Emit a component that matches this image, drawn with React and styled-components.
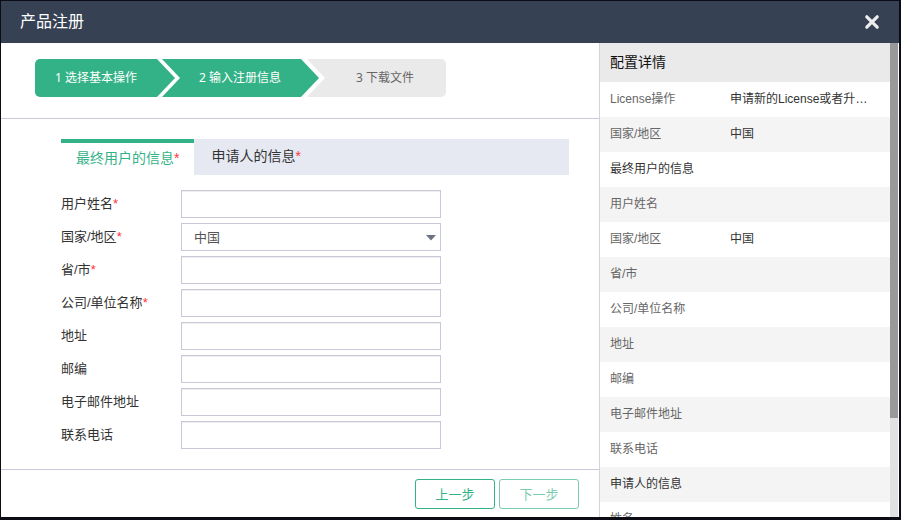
import React, { useState, useEffect, useRef } from 'react'
import styled, { createGlobalStyle } from 'styled-components'

const GlobalStyle = createGlobalStyle`
  * {
    box-sizing: border-box;
  }
  body {
    margin: 0;
    background: #0d0c14;
    color: #333;
    font-family: 'Liberation Sans', 'Noto Sans CJK SC', sans-serif;
    font-size: 12px;
  }
  button,
  input,
  select {
    font-family: inherit;
  }
`
const Page = styled.div`
  height: 100vh;
  padding: 1px 2px 3px 1px;
`
const Dialog = styled.div`
  height: 100%;
  display: flex;
  flex-direction: column;
  background: #fff;
`
const Header = styled.header`
  flex: none;
  display: flex;
  align-items: center;
  justify-content: space-between;
  height: 42px;
  padding: 0 19px;
  background: #364154;
`
const Title = styled.h1`
  margin: 0;
  color: #fff;
  font-size: 16px;
  font-weight: 400;
  line-height: 24px;
`
const CloseButton = styled.button`
  display: flex;
  padding: 0;
  border: 0;
  background: none;
  cursor: pointer;
`
const Body = styled.div`
  flex: 1;
  min-height: 0;
  display: flex;
`
const Main = styled.main`
  flex: 1;
  min-width: 0;
  display: flex;
  flex-direction: column;
`
const Steps = styled.ol`
  display: flex;
  margin: 0;
  padding: 16px 34px 21px;
  border-bottom: 1px solid #c9c8d8;
  list-style: none;
`
const Step = styled.li`
  display: flex;
  align-items: center;
  height: 38px;
  padding: 0 38px 2px 20px;
  background: ${({ $done }) => ($done ? '#34b287' : '#eaeaea')};
  color: ${({ $done }) => ($done ? '#fff' : '#666')};
  font-family: 'Noto Sans', 'Noto Sans CJK SC', sans-serif;
  white-space: nowrap;
  clip-path: polygon(
    0 0,
    calc(100% - 18px) 0,
    100% 50%,
    calc(100% - 18px) 100%,
    0 100%,
    18px 50%
  );

  & + & {
    margin-left: -13px;
    padding-left: 37px;
  }
  &:first-child {
    border-radius: 5px 0 0 5px;
    clip-path: polygon(
      0 0,
      calc(100% - 18px) 0,
      100% 50%,
      calc(100% - 18px) 100%,
      0 100%
    );
  }
  &:last-child {
    margin-left: -12px;
    padding-left: 49px;
    padding-right: 32px;
    border-radius: 0 5px 5px 0;
    clip-path: polygon(0 0, 100% 0, 100% 100%, 0 100%, 18px 50%);
  }
`
const Form = styled.form`
  flex: 1;
  min-height: 0;
  display: flex;
  flex-direction: column;
`
const FormContent = styled.div`
  flex: 1;
  min-height: 0;
  padding: 20px 30px 20px 60px;
`
const Tabs = styled.div`
  display: flex;
  height: 36px;
  margin-bottom: 15px;
  background: #e6e9f1;
`
const Tab = styled.button`
  padding: ${({ $active }) => ($active ? '0 15px 4px' : '0 17px 4px')};
  border: 0;
  border-top: ${({ $active }) => ($active ? '4px solid #34b287' : 0)};
  background: ${({ $active }) => ($active ? '#fff' : 'transparent')};
  color: ${({ $active }) => ($active ? '#34b287' : '#333')};
  font-size: 14px;
  cursor: pointer;
`
const Required = styled.span`
  color: #ff3333;
`
const Fields = styled.div`
  display: grid;
  gap: 5px;
`
const Field = styled.div`
  display: grid;
  grid-template-columns: 120px 260px;
  align-items: center;
`
const Label = styled.label`
  font-size: 13px;
  line-height: 24px;
`
const TextInput = styled.input`
  height: 28px;
  padding: 0 12px;
  border: 1px solid #c9c8d8;
  box-shadow: inset 0 1px 1px rgba(0, 0, 0, 0.07);
  color: #555;
  font-size: 13px;
`
const SelectBox = styled.div`
  position: relative;
`
const Select = styled.select`
  display: block;
  width: 100%;
  height: 28px;
  padding: 0 24px 0 12px;
  border: 1px solid #c9c8d8;
  border-radius: 0;
  background: #fff;
  color: #555;
  font-size: 13px;
  appearance: none;
`
const Arrow = styled.svg`
  position: absolute;
  top: 12px;
  right: 5px;
  pointer-events: none;
`
const Footer = styled.footer`
  display: flex;
  justify-content: flex-end;
  gap: 4px;
  padding: 9px 20px 8px;
  border-top: 1px solid #c9c8d8;
`
const ActionButton = styled.button`
  width: 80px;
  height: 30px;
  padding: 0 0 2px;
  border: 1px solid #34b287;
  border-radius: 3px;
  background: #fff;
  color: #34b287;
  font-size: 13px;
  opacity: ${({ disabled }) => (disabled ? 0.65 : 1)};
`
const Sidebar = styled.aside`
  flex: 0 0 300px;
  display: flex;
  padding-right: 1px;
  border-left: 1px solid #d4d4d8;
`
const SidebarContent = styled.div`
  flex: 1;
  min-width: 0;
  overflow-x: hidden;
  overflow-y: auto;
  scrollbar-width: none;
`
const ScrollTrack = styled.div`
  flex: none;
  width: 8px;
  background: #e1e1e1;
`
const ScrollThumb = styled.div`
  background: #999;
`
const SidebarTitle = styled.h2`
  margin: 0;
  padding: 0 10px;
  background: #eaeaea;
  color: #111;
  font-size: 14px;
  font-weight: 400;
  line-height: 39px;
`
const Details = styled.table`
  width: 100%;
  table-layout: fixed;
  border-collapse: collapse;
`
const DetailRow = styled.tr`
  height: 35px;

  &:nth-child(even) {
    background: #f4f4f4;
  }
`
const DetailLabel = styled.th`
  width: 130px;
  padding: 0 0 4px 10px;
  color: ${({ $section }) => ($section ? '#333' : '#666')};
  font-weight: 400;
  text-align: left;
`
const DetailValue = styled.td`
  padding: 0 20px 4px 0;
  overflow: hidden;
  text-overflow: ellipsis;
  white-space: nowrap;
`

const steps = [
  { title: '1 选择基本操作', done: true },
  { title: '2 输入注册信息', done: true },
  { title: '3 下载文件', done: false }
]
const tabs = [
  { id: 'user', title: '最终用户的信息' },
  { id: 'applicant', title: '申请人的信息' }
]
const fields = [
  { id: 'name', label: '用户姓名', required: true },
  { id: 'country', label: '国家/地区', required: true, options: ['中国'] },
  { id: 'city', label: '省/市', required: true },
  { id: 'company', label: '公司/单位名称', required: true },
  { id: 'address', label: '地址' },
  { id: 'zip', label: '邮编' },
  { id: 'email', label: '电子邮件地址' },
  { id: 'phone', label: '联系电话' }
]
const details = [
  { label: 'License操作', value: '申请新的License或者升级License' },
  { label: '国家/地区', value: '中国' },
  { label: '最终用户的信息', section: true },
  { label: '用户姓名' },
  { label: '国家/地区', value: '中国' },
  { label: '省/市' },
  { label: '公司/单位名称' },
  { label: '地址' },
  { label: '邮编' },
  { label: '电子邮件地址' },
  { label: '联系电话' },
  { label: '申请人的信息', section: true },
  { label: '姓名' },
  { label: '公司/单位名称' },
  { label: '电子邮件地址' },
  { label: '联系电话' }
]

const DetailsSidebar = () => {
  const contentRef = useRef(null)
  const [thumb, setThumb] = useState({ height: 0, top: 0 })

  const updateThumb = () => {
    const { clientHeight, scrollHeight, scrollTop } = contentRef.current
    const ratio = clientHeight / scrollHeight
    setThumb({
      height: Math.round(clientHeight * ratio),
      top: Math.round(scrollTop * ratio)
    })
  }

  useEffect(() => {
    updateThumb()
    window.addEventListener('resize', updateThumb)
    return () => window.removeEventListener('resize', updateThumb)
  }, [])

  return (
    <Sidebar>
      <SidebarContent ref={contentRef} onScroll={updateThumb}>
        <SidebarTitle>配置详情</SidebarTitle>
        <Details>
          <tbody>
            {details.map((row, i) => (
              <DetailRow key={i}>
                <DetailLabel scope="row" $section={row.section}>
                  {row.label}
                </DetailLabel>
                <DetailValue>{row.value}</DetailValue>
              </DetailRow>
            ))}
          </tbody>
        </Details>
      </SidebarContent>
      <ScrollTrack>
        <ScrollThumb
          style={{
            height: thumb.height,
            transform: `translateY(${thumb.top}px)`
          }}
        />
      </ScrollTrack>
    </Sidebar>
  )
}

const App = () => {
  const [activeTab, setActiveTab] = useState('user')

  return (
    <Page>
      <GlobalStyle />
      <Dialog role="dialog" aria-labelledby="dialog-title">
        <Header>
          <Title id="dialog-title">产品注册</Title>
          <CloseButton type="button" aria-label="关闭">
            <svg width="16" height="16" viewBox="0 0 16 16">
              <path
                d="M2.8 2.8L13.2 13.2M13.2 2.8L2.8 13.2"
                stroke="#ededed"
                strokeWidth="3.2"
                strokeLinecap="round"
              />
            </svg>
          </CloseButton>
        </Header>
        <Body>
          <Main>
            <Steps>
              {steps.map(step => (
                <Step key={step.title} $done={step.done}>
                  {step.title}
                </Step>
              ))}
            </Steps>
            <Form onSubmit={e => e.preventDefault()}>
              <FormContent>
                <Tabs role="tablist">
                  {tabs.map(tab => (
                    <Tab
                      key={tab.id}
                      type="button"
                      role="tab"
                      aria-selected={activeTab === tab.id}
                      $active={activeTab === tab.id}
                      onClick={() => setActiveTab(tab.id)}
                    >
                      {tab.title}
                      <Required>*</Required>
                    </Tab>
                  ))}
                </Tabs>
                <Fields>
                  {fields.map(field => (
                    <Field key={field.id}>
                      <Label htmlFor={field.id}>
                        {field.label}
                        {field.required && <Required>*</Required>}
                      </Label>
                      {field.options ? (
                        <SelectBox>
                          <Select id={field.id}>
                            {field.options.map(option => (
                              <option key={option}>{option}</option>
                            ))}
                          </Select>
                          <Arrow width="10" height="6" viewBox="0 0 10 6">
                            <path d="M0 0H10L5 5.5Z" fill="#6b7280" />
                          </Arrow>
                        </SelectBox>
                      ) : (
                        <TextInput id={field.id} type="text" />
                      )}
                    </Field>
                  ))}
                </Fields>
              </FormContent>
              <Footer>
                <ActionButton type="button">上一步</ActionButton>
                <ActionButton type="submit" disabled>
                  下一步
                </ActionButton>
              </Footer>
            </Form>
          </Main>
          <DetailsSidebar />
        </Body>
      </Dialog>
    </Page>
  )
}

export default App
